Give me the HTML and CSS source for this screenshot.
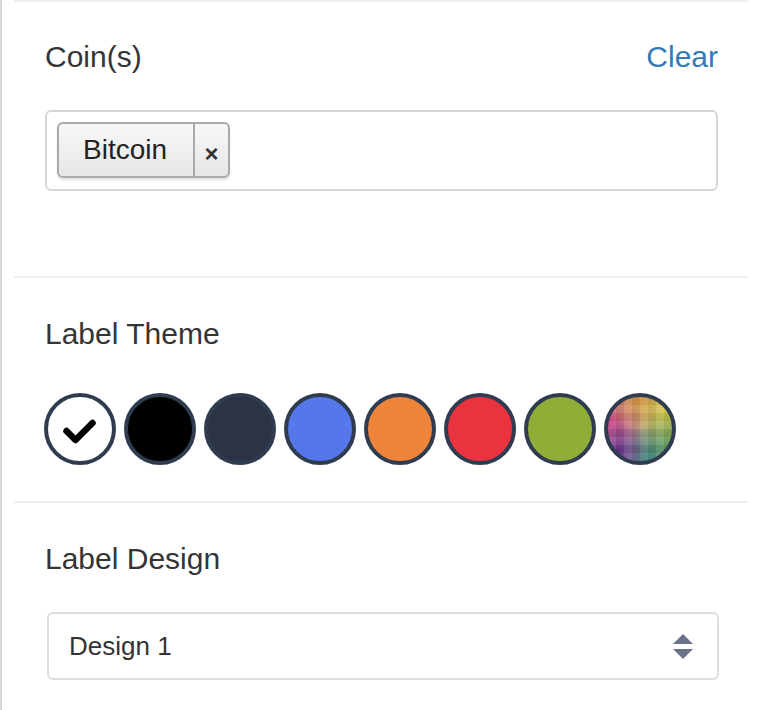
FILE: index.html
```html
<!DOCTYPE html>
<html>
<head>
<meta charset="utf-8">
<link rel="stylesheet" href="styles.css">
</head>
<body>
<div class="panel">
  <section class="section section-coins">
    <div class="head">
      <span class="label">Coin(s)</span>
      <a class="clear">Clear</a>
    </div>
    <div class="tagbox">
      <div class="tag">
        <span class="tag-text">Bitcoin</span>
        <span class="tag-remove">×</span>
      </div>
    </div>
  </section>
  <section class="section section-theme">
    <div class="label">Label Theme</div>
    <div class="swatches">
      <span class="swatch sw-white">
        <svg width="64" height="64" viewBox="0 0 64 64"><path d="M18.5 34 L27.5 43 L44.5 26" fill="none" stroke="#000" stroke-width="6.5" stroke-linecap="round" stroke-linejoin="round"/></svg>
      </span>
      <span class="swatch sw-black"></span>
      <span class="swatch sw-navy"></span>
      <span class="swatch sw-blue"></span>
      <span class="swatch sw-orange"></span>
      <span class="swatch sw-red"></span>
      <span class="swatch sw-green"></span>
      <span class="swatch sw-multi"></span>
    </div>
  </section>
  <section class="section section-design">
    <div class="label">Label Design</div>
    <div class="select">
      <span class="select-text">Design 1</span>
      <svg class="select-arrows" width="20" height="26" viewBox="0 0 20 26"><path d="M10 0 L20 10 L0 10 Z" fill="#6b7389"/><path d="M0 15 L20 15 L10 25 Z" fill="#6b7389"/></svg>
    </div>
  </section>
</div>
</body>
</html>
```
FILE: styles.css
```css
html, body {
  margin: 0;
  padding: 0;
  background: #fff;
}
body {
  font-family: "Liberation Sans", Arial, Helvetica, sans-serif;
  color: #333;
}
.panel {
  border-left: 2px solid #d5d8dd;
  padding: 0 12px;
  min-height: 710px;
  box-sizing: border-box;
}
.section {
  border-top: 2px solid #eeeeee;
  padding: 37px 30px 0 31px;
}
.section-coins { padding-bottom: 85px; }
.section-theme { padding-top: 38px; padding-bottom: 36px; }
.section-design { padding-top: 38px; padding-bottom: 40px; }
.head {
  display: flex;
  justify-content: space-between;
  align-items: center;
}
.label {
  font-size: 30px;
  line-height: 36px;
  color: #353535;
}
.clear {
  font-size: 30px;
  line-height: 36px;
  color: #337ab7;
  cursor: pointer;
}
.tagbox {
  margin-top: 35px;
  height: 81px;
  box-sizing: border-box;
  border: 2px solid #d6d6d6;
  border-radius: 6px;
  padding: 10px;
  display: flex;
  align-items: flex-start;
}
.tag {
  display: inline-flex;
  height: 56px;
  box-sizing: border-box;
  border: 2px solid #aaaaaa;
  border-radius: 6px;
  background: linear-gradient(#f8f8f8, #e6e6e6);
  box-shadow: 0 2px 2px rgba(0, 0, 0, 0.12);
}
.tag-text {
  display: flex;
  align-items: center;
  padding: 0 26px 0 24px;
  font-size: 28px;
  color: #222;
}
.tag-remove {
  display: flex;
  align-items: center;
  justify-content: center;
  width: 33px;
  border-left: 2px solid #aaaaaa;
  padding-top: 7px;
  font-size: 24px;
  font-weight: bold;
  color: #333;
}
.swatches {
  display: flex;
  gap: 8px;
  margin-top: 41px;
  margin-left: -1px;
}
.swatch {
  width: 72px;
  height: 72px;
  box-sizing: border-box;
  border-radius: 50%;
  border: 4px solid #2f3c4f;
  display: flex;
  align-items: center;
  justify-content: center;
  overflow: hidden;
}
.sw-white { background: #fff; }
.sw-black { background: #000; }
.sw-navy { background: #2c3345; border-color: #2f3c50; }
.sw-blue { background: #5577ec; }
.sw-orange { background: #ee853a; }
.sw-red { background: #ea333f; }
.sw-green { background: #90ad38; }
.sw-multi {
  background:
    repeating-linear-gradient(90deg, rgba(255,255,255,0.06) 0 8px, rgba(0,0,0,0.05) 8px 16px),
    repeating-linear-gradient(0deg, rgba(255,255,255,0.06) 0 8px, rgba(0,0,0,0.05) 8px 16px),
    radial-gradient(circle at 15% 85%, rgba(100,40,150,0.95) 0%, rgba(100,40,150,0) 40%),
    radial-gradient(circle at 60% 100%, rgba(40,130,120,0.95) 0%, rgba(40,130,120,0) 45%),
    radial-gradient(circle at 95% 75%, rgba(100,170,80,0.9) 0%, rgba(100,170,80,0) 45%),
    radial-gradient(circle at 95% 25%, rgba(215,210,60,0.95) 0%, rgba(215,210,60,0) 45%),
    radial-gradient(circle at 50% 0%, rgba(230,150,60,0.95) 0%, rgba(230,150,60,0) 50%),
    radial-gradient(circle at 0% 40%, rgba(215,50,130,0.95) 0%, rgba(215,50,130,0) 45%),
    #b59a8a;
}
.select {
  margin-top: 35px;
  margin-left: 2px;
  margin-right: -1px;
  height: 68px;
  box-sizing: border-box;
  border: 2px solid #dddddd;
  border-radius: 6px;
  display: flex;
  align-items: center;
  justify-content: space-between;
  padding: 0 24px 0 20px;
}
.select-text {
  font-size: 26px;
  color: #333;
}
.select-arrows {
  display: block;
  margin-top: 2px;
}
```
